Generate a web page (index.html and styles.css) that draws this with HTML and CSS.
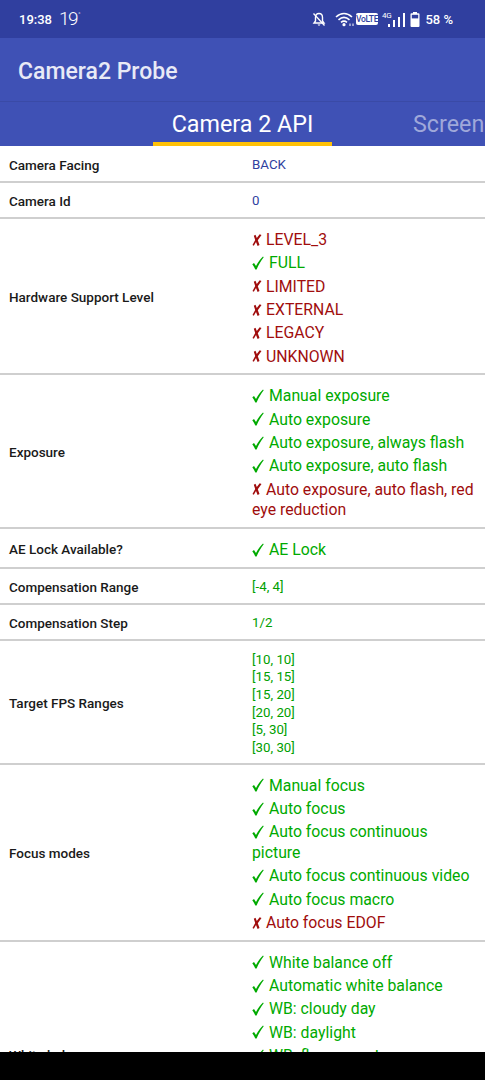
FILE: index.html
```html
<!DOCTYPE html>
<html lang="en">
<head>
    <meta charset="UTF-8">
    <meta name="viewport" content="width=device-width, initial-scale=1.0">
    <title>Camera2 Probe</title>
    <link rel="stylesheet" href="styles.css">
</head>
<body>
    <svg class="defs" width="0" height="0">
        <symbol id="check" viewBox="0 0 12 14">
            <path d="M0.300 8.200l1.700-1.300 2 3.200C6 6.200 8.400 3 11 0.600l0.700 0.600C8.900 4.700 6.600 8.700 4.600 13.400H3.300C2.500 11.500 1.500 9.800 0.300 8.200z"/>
        </symbol>
        <symbol id="cross" viewBox="0 0 10 14">
            <path d="M1.800 2.800l1.700-1 1.300 3.300L7.700 1.200l1.800 0.700-3.700 5.300 1.700 4.700-1.900 1.100L4 8.900 1.800 12.800 0.500 12l2.700-5z"/>
        </symbol>
    </svg>
    <div class="phone">
        <div class="status-bar">
            <span class="clock">19:38</span>
            <span class="temp">19<sup>°</sup></span>
            <div class="status-icons">
                <svg class="ic-bell" width="14" height="15" viewBox="0 0 14 15">
                    <path d="M7 1.500c-2.300 0-3.500 1.800-3.500 4v3.500L2 11h10L10.500 9V5.500c0-2.200-1.200-4-3.500-4z" fill="none" stroke="#fff" stroke-width="1.400"/>
                    <path d="M5.500 12.500h3L7 14z" fill="#fff"/>
                    <path d="M1.500 1.500l11 12" stroke="#fff" stroke-width="1.300"/>
                </svg>
                <svg class="ic-wifi" width="20" height="15" viewBox="0 0 20 15">
                    <path d="M1 5c5-4.500 11-4.500 16 0M3.500 7.800c3.500-3 7.500-3 11 0M6 10.300c2-1.600 4-1.600 6 0" fill="none" stroke="#fff" stroke-width="1.600"/>
                    <circle cx="9" cy="12.700" r="1.600" fill="#fff"/>
                    <path d="M15 14v-2.500M18 14v-2.500" stroke="#fff" stroke-width="1"/>
                </svg>
                <span class="volte">VoLTE</span>
                <span class="net">4G</span>
                <div class="signal">
                    <i class="s1"></i><i class="s2"></i><i class="s3"></i><i class="s4"></i>
                </div>
                <svg class="ic-batt" width="10" height="15" viewBox="0 0 10 15">
                    <path d="M3 0h4v1.200h1.500a1 1 0 0 1 1 1V14a1 1 0 0 1-1 1h-7a1 1 0 0 1-1-1V2.200a1 1 0 0 1 1-1H3z" fill="#fff"/>
                    <rect x="1.800" y="2.800" width="6.400" height="3.600" fill="#303f9f"/>
                </svg>
                <span class="pct">58 %</span>
            </div>
        </div>
        <header class="app-bar">Camera2 Probe</header>
        <div class="tabs">
            <div class="tab active">Camera 2 API</div>
            <div class="tab">Screen</div>
        </div>
        <div class="content">
            <div class="row">
                <div class="label">Camera Facing</div>
                <div class="value small blue">BACK</div>
            </div>
            <div class="row">
                <div class="label">Camera Id</div>
                <div class="value small blue">0</div>
            </div>
            <div class="row">
                <div class="label">Hardware Support Level</div>
                <div class="value">
                    <div class="no"><svg class="mark-no"><use href="#cross"/></svg>LEVEL_3</div>
                    <div class="yes"><svg class="mark-yes"><use href="#check"/></svg>FULL</div>
                    <div class="no"><svg class="mark-no"><use href="#cross"/></svg>LIMITED</div>
                    <div class="no"><svg class="mark-no"><use href="#cross"/></svg>EXTERNAL</div>
                    <div class="no"><svg class="mark-no"><use href="#cross"/></svg>LEGACY</div>
                    <div class="no"><svg class="mark-no"><use href="#cross"/></svg>UNKNOWN</div>
                </div>
            </div>
            <div class="row">
                <div class="label">Exposure</div>
                <div class="value">
                    <div class="yes"><svg class="mark-yes"><use href="#check"/></svg>Manual exposure</div>
                    <div class="yes"><svg class="mark-yes"><use href="#check"/></svg>Auto exposure</div>
                    <div class="yes"><svg class="mark-yes"><use href="#check"/></svg>Auto exposure, always flash</div>
                    <div class="yes"><svg class="mark-yes"><use href="#check"/></svg>Auto exposure, auto flash</div>
                    <div class="no"><svg class="mark-no"><use href="#cross"/></svg>Auto exposure, auto flash, red eye reduction</div>
                </div>
            </div>
            <div class="row row-ae">
                <div class="label">AE Lock Available?</div>
                <div class="value">
                    <div class="yes"><svg class="mark-yes"><use href="#check"/></svg>AE Lock</div>
                </div>
            </div>
            <div class="row">
                <div class="label">Compensation Range</div>
                <div class="value small green">[-4, 4]</div>
            </div>
            <div class="row">
                <div class="label">Compensation Step</div>
                <div class="value small green">1/2</div>
            </div>
            <div class="row">
                <div class="label">Target FPS Ranges</div>
                <div class="value small green list">
                    <div>[10, 10]</div>
                    <div>[15, 15]</div>
                    <div>[15, 20]</div>
                    <div>[20, 20]</div>
                    <div>[5, 30]</div>
                    <div>[30, 30]</div>
                </div>
            </div>
            <div class="row">
                <div class="label">Focus modes</div>
                <div class="value">
                    <div class="yes"><svg class="mark-yes"><use href="#check"/></svg>Manual focus</div>
                    <div class="yes"><svg class="mark-yes"><use href="#check"/></svg>Auto focus</div>
                    <div class="yes"><svg class="mark-yes"><use href="#check"/></svg>Auto focus continuous picture</div>
                    <div class="yes"><svg class="mark-yes"><use href="#check"/></svg>Auto focus continuous video</div>
                    <div class="yes"><svg class="mark-yes"><use href="#check"/></svg>Auto focus macro</div>
                    <div class="no"><svg class="mark-no"><use href="#cross"/></svg>Auto focus EDOF</div>
                </div>
            </div>
            <div class="row">
                <div class="label">White balance</div>
                <div class="value">
                    <div class="yes"><svg class="mark-yes"><use href="#check"/></svg>White balance off</div>
                    <div class="yes"><svg class="mark-yes"><use href="#check"/></svg>Automatic white balance</div>
                    <div class="yes"><svg class="mark-yes"><use href="#check"/></svg>WB: cloudy day</div>
                    <div class="yes"><svg class="mark-yes"><use href="#check"/></svg>WB: daylight</div>
                    <div class="yes"><svg class="mark-yes"><use href="#check"/></svg>WB: fluorescent</div>
                    <div class="yes"><svg class="mark-yes"><use href="#check"/></svg>WB: incandescent</div>
                    <div class="yes"><svg class="mark-yes"><use href="#check"/></svg>WB: shade</div>
                    <div class="yes"><svg class="mark-yes"><use href="#check"/></svg>WB: twilight</div>
                    <div class="yes"><svg class="mark-yes"><use href="#check"/></svg>WB: warm fluorescent</div>
                </div>
            </div>
        </div>
        <div class="nav-bar"></div>
    </div>
</body>
</html>
```

FILE: styles.css
```css
html, body {
    margin: 0;
    padding: 0;
}

body {
    font-family: Roboto, "Liberation Sans", sans-serif;
    background-color: #fff;
}

.defs {
    display: block;
    height: 0;
}

.phone {
    width: 485px;
    height: 1080px;
    display: flex;
    flex-direction: column;
    overflow: hidden;
}

.status-bar {
    height: 38px;
    flex: none;
    display: flex;
    align-items: center;
    padding: 0 32px 0 19px;
    box-sizing: border-box;
    background-color: #303f9f;
    color: #fff;
}

.clock {
    font-size: 13px;
    font-weight: 500;
}

.temp {
    margin-left: 7px;
    font-size: 19px;
    font-weight: 300;
    letter-spacing: -1.500px;
    line-height: 18px;
}

.temp sup {
    font-size: 7px;
    vertical-align: 8px;
    line-height: 0;
    letter-spacing: 0;
    margin-left: 1px;
}

.status-icons {
    margin-left: auto;
    display: flex;
    align-items: center;
}

.ic-bell {
    margin-right: 9px;
}

.volte {
    margin-left: 1px;
    width: 22px;
    height: 12px;
    background-color: #fff;
    color: #303f9f;
    border-radius: 2px;
    font-size: 8.500px;
    font-weight: 500;
    line-height: 12px;
    text-align: center;
    letter-spacing: -0.300px;
}

.net {
    margin-left: 4px;
    align-self: flex-start;
    margin-top: -1px;
    font-size: 8px;
    line-height: 9px;
    letter-spacing: -0.300px;
}

.signal {
    display: flex;
    align-items: flex-end;
    gap: 3px;
    height: 14px;
    margin-left: -3px;
    margin-top: 1px;
}

.signal i {
    display: block;
    width: 2px;
    background-color: #fff;
}

.s1 { height: 3px; }
.s2 { height: 7px; }
.s3 { height: 10px; }
.s4 { height: 14px; }

.ic-batt {
    margin-left: 5px;
}

.pct {
    margin-left: 5px;
    font-size: 13px;
    font-weight: 500;
}

.app-bar {
    height: 64px;
    flex: none;
    box-sizing: border-box;
    padding: 20px 18px 0;
    background-color: #3f51b5;
    border-bottom: 1px solid #3a4aa6;
    color: #e8eaf6;
    font-size: 23px;
    font-weight: 500;
    line-height: 28px;
}

.tabs {
    height: 44px;
    flex: none;
    display: flex;
    background-color: #3f51b5;
    overflow: hidden;
    box-sizing: border-box;
    padding-left: 153px;
    white-space: nowrap;
}

.tab {
    font-size: 23.300px;
    line-height: 45px;
    color: #9fa8da;
}

.tab.active {
    width: 179px;
    height: 44px;
    box-sizing: border-box;
    border-bottom: 4px solid #ffc107;
    text-align: center;
    color: #fff;
    margin-right: 81px;
}

.content {
    flex: 1;
    min-height: 0;
    overflow: hidden;
    padding-top: 1px;
}

.row {
    display: flex;
    align-items: center;
    border-bottom: 2px solid #cfcfcf;
    box-sizing: border-box;
    padding: 8px 0 6px 9px;
}

.row-ae {
    min-height: 40px;
}

.label {
    width: 243px;
    flex: none;
    font-size: 13.500px;
    font-weight: 500;
    color: #1a1a1a;
}

.value {
    flex: 1;
    padding: 0 8px 0 0;
    font-size: 15.800px;
    line-height: 20.700px;
}

.value.small {
    font-size: 13.300px;
    line-height: 18px;
    padding-top: 1px;
    padding-bottom: 1px;
}

.value.list {
    line-height: 17.670px;
    padding-top: 2px;
    padding-bottom: 0;
}

.mark-yes,
.mark-no {
    display: inline-block;
    height: 14px;
    fill: currentColor;
    vertical-align: -2px;
    margin-top: 5.660px;
}

.mark-yes {
    width: 12px;
    margin-right: 5px;
}

.mark-no {
    width: 10px;
    margin-right: 4px;
}

.blue { color: #303f9f; }
.green { color: #00a000; }
.yes { color: #00aa00; }
.no { color: #a00d0d; }

.nav-bar {
    height: 28px;
    flex: none;
    background-color: #000;
}
```
